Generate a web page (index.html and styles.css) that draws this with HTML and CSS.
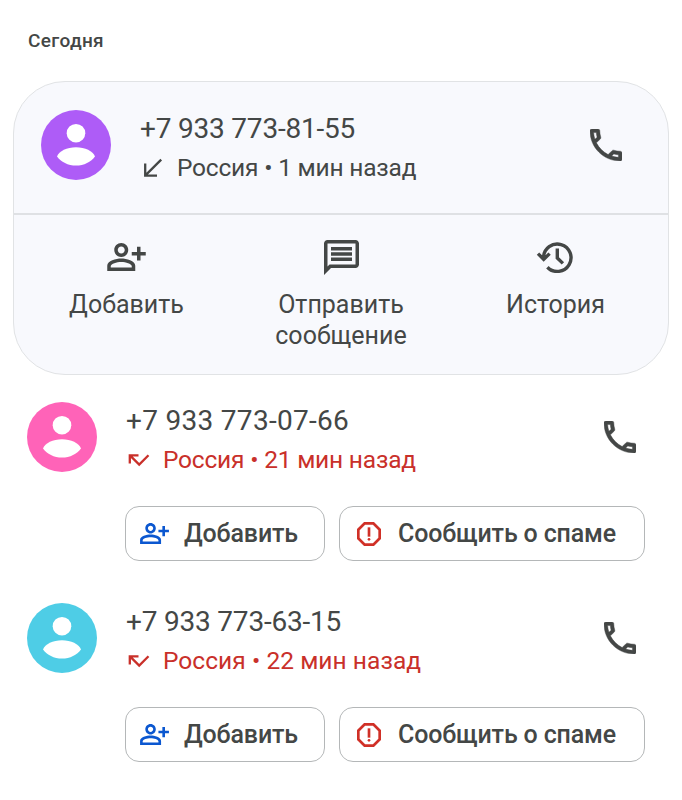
FILE: index.html
```html
<!DOCTYPE html>
<html lang="ru">
<head>
    <meta charset="UTF-8">
    <title>Недавние вызовы</title>
    <link rel="stylesheet" href="styles.css">
</head>
<body>
    <svg class="sprite">
        <symbol id="person" viewBox="0 0 70 70">
            <circle cx="35" cy="23.2" r="9.3"/>
            <path d="M16 46.5C18 41 26 37.2 35 37.2S52 41 54 46.5C50 52 43 55.6 35 55.6S20 52 16 46.5Z"/>
        </symbol>
        <symbol id="call" viewBox="3 3 18 18">
            <path d="M6.54 5c.06.89.21 1.76.45 2.59l-1.2 1.2c-.41-1.2-.67-2.47-.76-3.79h1.51m9.86 12.02c.85.24 1.72.39 2.6.45v1.49c-1.32-.09-2.59-.35-3.8-.75l1.2-1.19M7.5 3H4c-.55 0-1 .45-1 1 0 9.39 7.61 17 17 17 .55 0 1-.45 1-1v-3.49c0-.55-.45-1-1-1-1.24 0-2.45-.2-3.57-.57-.1-.04-.21-.05-.31-.05-.26 0-.51.1-.71.29l-2.2 2.2c-2.83-1.45-5.15-3.76-6.59-6.59l2.2-2.2c.28-.28.36-.67.25-1.02C8.7 6.45 8.5 5.25 8.5 4c0-.55-.45-1-1-1z" stroke="currentColor" stroke-width=".25"/>
        </symbol>
        <symbol id="add" viewBox="0 0 22 16">
            <path d="M8 0C5.79 0 4 1.79 4 4s1.79 4 4 4 4-1.79 4-4-1.79-4-4-4zm0 6c-1.1 0-2-.9-2-2s.9-2 2-2 2 .9 2 2-.9 2-2 2zM8 8.8c-3 0-8 1.1-8 4.2v3h16v-3c0-3.1-5-4.2-8-4.2zm6 5.2H2v-.9c.2-1.3 3.3-2.3 6-2.3s5.8 1 6 2.3v.9zM17 2.2h2v2.9h3v2h-3V10h-2V7.1h-3v-2h3z"/>
        </symbol>
        <symbol id="chat" viewBox="2 2 20 20">
            <path d="M4 4h16v12H5.17L4 17.17V4m0-2c-1.1 0-2 .9-2 2v18l4-4h14c1.1 0 2-.9 2-2V4c0-1.1-.9-2-2-2H4zm2 10h12v2H6v-2zm0-3h12v2H6V9zm0-3h12v2H6V6z"/>
        </symbol>
        <symbol id="history" viewBox="0 0 38 32">
            <path class="line" d="M11.4 26.2A13.7 13.7 0 1 0 7.6 16.5V19M2 12.6l5.7 5.7 5.9-5.7M21.3 7.5v9.5l5.6 5.4" stroke-width="3.4"/>
        </symbol>
        <symbol id="received" viewBox="0 0 20 20">
            <path class="line" d="M18.2 1.6 2.4 17.4M2.2 5.5V17.6H14" stroke-width="2.3"/>
        </symbol>
        <symbol id="missed" viewBox="0 0 22 14">
            <path class="line" d="M2.2 2.6 11.2 11.6 20.5 2.3M1.8 10.5V2.3H10.5" stroke-width="2.3"/>
        </symbol>
        <symbol id="report" viewBox="3 3 18 18">
            <path d="M15.73 3H8.27L3 8.27v7.46L8.27 21h7.46L21 15.73V8.27L15.73 3zM19 14.9L14.9 19H9.1L5 14.9V9.1L9.1 5h5.8L19 9.1v5.8z"/>
            <circle cx="12" cy="16" r="1"/>
            <path d="M11 7h2v7h-2z"/>
        </symbol>
    </svg>

    <h2 class="section-title">Сегодня</h2>

    <div class="card">
        <div class="call-row">
            <svg class="avatar purple"><use href="#person"/></svg>
            <div class="call-details">
                <div class="number">+7 933 773-81-55</div>
                <div class="info"><svg class="received"><use href="#received"/></svg><span>Россия • 1 мин назад</span></div>
            </div>
            <svg class="call-icon"><use href="#call"/></svg>
        </div>
        <div class="actions">
            <div class="action">
                <svg class="add-icon"><use href="#add"/></svg>
                <span>Добавить</span>
            </div>
            <div class="action">
                <svg class="chat-icon"><use href="#chat"/></svg>
                <span>Отправить<br>сообщение</span>
            </div>
            <div class="action">
                <svg class="history-icon"><use href="#history"/></svg>
                <span>История</span>
            </div>
        </div>
    </div>

    <div class="call">
        <div class="call-row">
            <svg class="avatar pink"><use href="#person"/></svg>
            <div class="call-details">
                <div class="number wide">+7 933 773-07-66</div>
                <div class="info red"><svg class="missed"><use href="#missed"/></svg><span>Россия • 21 мин назад</span></div>
            </div>
            <svg class="call-icon"><use href="#call"/></svg>
        </div>
        <div class="buttons">
            <button class="add"><svg><use href="#add"/></svg>Добавить</button>
            <button class="spam"><svg><use href="#report"/></svg>Сообщить о спаме</button>
        </div>
    </div>

    <div class="call">
        <div class="call-row">
            <svg class="avatar cyan"><use href="#person"/></svg>
            <div class="call-details">
                <div class="number">+7 933 773-63-15</div>
                <div class="info red wide"><svg class="missed"><use href="#missed"/></svg><span>Россия • 22 мин назад</span></div>
            </div>
            <svg class="call-icon"><use href="#call"/></svg>
        </div>
        <div class="buttons">
            <button class="add"><svg><use href="#add"/></svg>Добавить</button>
            <button class="spam"><svg><use href="#report"/></svg>Сообщить о спаме</button>
        </div>
    </div>
</body>
</html>
```
FILE: styles.css
```css
* {
    box-sizing: border-box;
}
body {
    font-family: Roboto, "Liberation Sans", sans-serif;
    background-color: white;
    color: #444746;
    margin: 0;
    padding: 30px 13px 0;
}
svg {
    display: block;
    flex: none;
    fill: currentColor;
}
.sprite {
    display: none;
}
.line {
    fill: none;
    stroke: currentColor;
}
.section-title {
    font-size: 19px;
    line-height: 22px;
    font-weight: 500;
    letter-spacing: 0.35px;
    margin: 0 0 29px 15px;
}
.card {
    height: 294px;
    background-color: #f8f9fd;
    border: 1px solid #e1e3e5;
    border-radius: 52px;
    overflow: hidden;
}
.call-row {
    display: flex;
    align-items: flex-start;
}
.card .call-row {
    height: 133px;
    padding: 28px 46px 0 27px;
    border-bottom: 2px solid #dfe1e4;
}
.avatar {
    width: 70px;
    height: 70px;
    border-radius: 50%;
    fill: white;
}
.purple {
    background-color: #ae5cf7;
}
.pink {
    background-color: #ff63b8;
}
.cyan {
    background-color: #4ecde6;
}
.call-details {
    flex: 1;
    margin-left: 29px;
}
.number {
    font-size: 28px;
    line-height: 36px;
    letter-spacing: -0.2px;
    margin-top: 1px;
    white-space: nowrap;
}
.number.wide {
    letter-spacing: 0.3px;
}
.info {
    display: flex;
    align-items: center;
    font-size: 24.5px;
    line-height: 32px;
    letter-spacing: -0.2px;
    margin-top: 5px;
    white-space: nowrap;
}
.info.wide {
    letter-spacing: 0.05px;
}
.red {
    color: #c9302a;
}
.received {
    width: 20px;
    height: 20px;
    margin: 0 14px 0 3px;
}
.missed {
    width: 22px;
    height: 14px;
    margin: 0 13px 0 2px;
}
.call-icon {
    width: 32px;
    height: 32px;
    margin-top: 19px;
}
.actions {
    display: grid;
    grid-template-columns: 225px 1fr 225px;
    padding-top: 25px;
}
.action {
    display: flex;
    flex-direction: column;
    align-items: center;
    font-size: 25px;
    line-height: 31px;
    text-align: center;
}
.action span {
    margin-top: 14px;
}
.add-icon {
    width: 39px;
    height: 28px;
    margin: 3px 0 4px;
}
.chat-icon {
    width: 35px;
    height: 35px;
}
.history-icon {
    width: 38px;
    height: 32px;
    margin: 1px 2px 2px 0;
}
.call {
    height: 201px;
    padding: 27px 33px 0 14px;
}
.buttons {
    display: flex;
    gap: 14px;
    margin: 30px 0 0 98px;
}
button {
    display: flex;
    flex: none;
    align-items: center;
    height: 55px;
    padding: 0 0 0 14px;
    background-color: white;
    color: #444746;
    border: 1px solid #b4b7b8;
    border-radius: 14px;
    font-family: inherit;
    font-size: 25px;
    font-weight: 500;
    letter-spacing: -0.15px;
    white-space: nowrap;
}
.add {
    width: 200px;
}
.add svg {
    width: 29px;
    height: 21px;
    margin-right: 15px;
    color: #0b57d0;
}
.spam {
    width: 306px;
}
.spam svg {
    width: 24px;
    height: 24px;
    margin: 0 17px 0 3px;
    color: #d03027;
}
```
